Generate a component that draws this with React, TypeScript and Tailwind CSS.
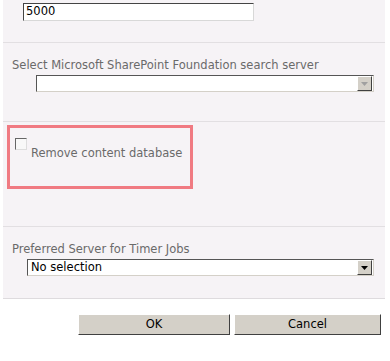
import React from "react";

function DropArrow(props: { disabled?: boolean }) {
  return (
    <div className="flex h-[15px] w-[15px] items-center justify-center border border-t-white border-l-white border-r-[#404040] border-b-[#404040] bg-[#d4d0c8]">
      <svg width="7" height="4" viewBox="0 0 7 4">
        <path d="M0 0h7L3.5 4z" fill={props.disabled ? "#a0a0a0" : "#000"} />
      </svg>
    </div>
  );
}

function Select(props: { value?: string; disabled?: boolean; className: string }) {
  return (
    <div className={"flex h-[17px] items-center justify-between border border-t-[#555] border-l-[#555] border-r-[#d4d0c8] border-b-[#d4d0c8] bg-white pr-px " + props.className}>
      <span className="pl-[3px] text-[11.5px] leading-none text-black">{props.value}</span>
      <DropArrow disabled={props.disabled} />
    </div>
  );
}

export default function App() {
  return (
    <div className="h-[361px] w-[390px] bg-white font-['DejaVu_Sans',sans-serif] text-[11.5px] text-[#6a6a6a]">
      <div className="ml-[3px] w-[382px] border-b border-[#dedbde] bg-[#f6f3f6]">
        <div className="h-[43px] border-b border-[#e2dfe2] pt-[3px] pl-[20px]">
          <div className="flex h-[18px] w-[231px] items-center border border-t-[#444] border-l-[#444] border-r-[#d8d8d8] border-b-[#d8d8d8] bg-white pl-[2px] text-[11.5px] text-black">
            5000
          </div>
        </div>

        <div className="h-[79px] border-b border-[#e2dfe2] pt-[15px] pl-[9px]">
          <div className="leading-[14px]">Select Microsoft SharePoint Foundation search server</div>
          <Select disabled className="ml-[24px] mt-[3px] w-[338px]" />
        </div>

        <div className="h-[105px] border-b border-[#e2dfe2] pt-[3px] pl-[4px]">
          <div className="h-[64px] w-[186px] border-[3px] border-[#f07a82] pt-[10px] pl-[5px]">
            <div className="flex items-start gap-[4px]">
              <div className="h-[12px] w-[12px] border border-t-[#666] border-l-[#666] border-r-[#ddd] border-b-[#ddd] bg-[#f8f8f8]" />
              <span className="mt-[8px] leading-[14px]">Remove content database</span>
            </div>
          </div>
        </div>

        <div className="h-[71px] pt-[15px] pl-[9px]">
          <div className="leading-[14px]">Preferred Server for Timer Jobs</div>
          <Select value="No selection" className="ml-[15px] mt-[3px] w-[347px]" />
        </div>
      </div>

      <div className="flex gap-[4px] pt-[15px] pl-[78px]">
        <button className="h-[21px] w-[152px] border border-t-white border-l-white border-r-[#404040] border-b-[#404040] bg-[#d4d0c8] text-[11.5px] text-black">
          OK
        </button>
        <button className="h-[21px] w-[147px] border border-t-white border-l-white border-r-[#404040] border-b-[#404040] bg-[#d4d0c8] text-[11.5px] text-black">
          Cancel
        </button>
      </div>
    </div>
  );
}
